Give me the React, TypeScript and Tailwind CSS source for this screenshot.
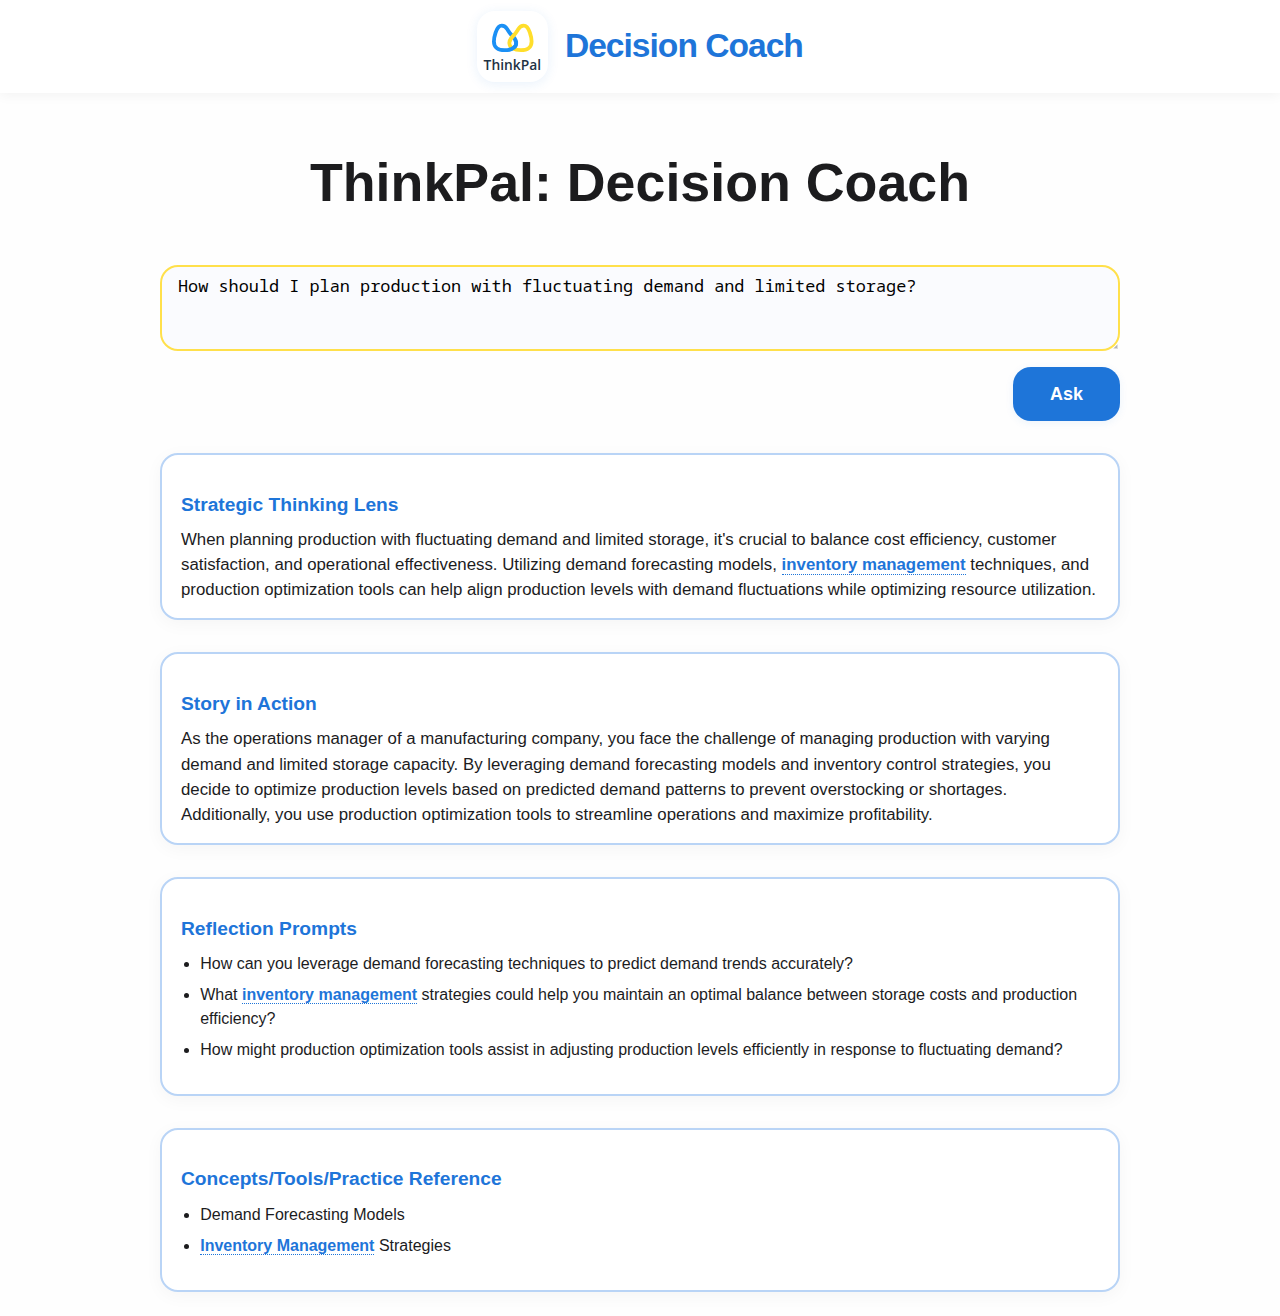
import type { ReactNode } from "react";

const LOOP =
  "M24.8 14.7 C21.4 14.7 19.8 18 18.6 21.6 C17.4 25.2 16.9 28 16.9 30.4 C16.9 36.2 21 39.2 27.5 39.2 C34.3 39.2 39.2 36.8 39.2 32 C39.2 29 37.4 26.9 35.4 25 C33 22.7 31.8 20.6 30.3 18.2 C28.9 16 27.3 14.7 24.8 14.7 Z";

function Logo() {
  return (
    <svg
      viewBox="0 0 71 71"
      className="h-[71px] w-[71px] rounded-[18px] bg-white shadow-[0_2px_12px_rgba(30,117,217,0.1)]"
      aria-label="ThinkPal"
    >
      <g fill="none" strokeWidth="3.8" strokeLinejoin="round">
        <path d={LOOP} stroke="#1b90f5" />
        <path d={LOOP} stroke="#ffde2b" transform="translate(71.5 0) scale(-1 1)" />
        <path d="M39 30.6 C39.2 31 39.2 31.6 39.2 32 C39.2 35.8 36 38 31 38.9" stroke="#1b90f5" />
      </g>
      <text
        x="6.6"
        y="59.2"
        textLength="57.4"
        lengthAdjust="spacingAndGlyphs"
        fill="#1f3344"
        fontFamily="'Open Sans', sans-serif"
        fontSize="13.8"
        fontWeight="600"
      >
        ThinkPal
      </text>
    </svg>
  );
}

function Term({ children }: { children: ReactNode }) {
  return (
    <a className="cursor-pointer border-b border-dotted border-[#1e75d9] font-bold text-[#1e75d9]">
      {children}
    </a>
  );
}

function Card({ title, children }: { title: string; children: ReactNode }) {
  return (
    <section className="mb-8 rounded-[18px] border-2 border-[#b9d4f6] bg-white px-[19px] pb-[15.8px] shadow-[0_4px_18px_rgba(0,0,0,0.04)]">
      <h3 className="mt-[38.6px] mb-[11.4px] text-[19.2px] leading-[22px] font-bold text-[#1e75d9]">
        {title}
      </h3>
      {children}
    </section>
  );
}

function Paragraph({ children }: { children: ReactNode }) {
  return <p className="text-[16.82px] leading-[25.2px]">{children}</p>;
}

function Bullets({ children }: { children: ReactNode }) {
  return (
    <ul className="mt-[12.4px] mb-4 list-disc pl-[19.2px] text-base leading-6 [&>li]:mb-[7px]">
      {children}
    </ul>
  );
}

export default function App() {
  return (
    <div className="min-h-[1316px] bg-[#fefefe] font-['Liberation_Sans',Arial,sans-serif] text-[#1c1c1e]">
      <header className="flex h-[93px] items-center justify-center gap-[16.8px] bg-white shadow-[0_2px_12px_rgba(0,0,0,0.05)]">
        <Logo />
        <span className="mb-px text-[33.6px] leading-10 font-bold tracking-[-1px] text-[#1e75d9]">
          Decision Coach
        </span>
      </header>

      <main className="mx-auto w-[960px] pt-[57px]">
        <h1 className="mb-[51px] text-center text-[53.76px] leading-[64px] font-bold">
          ThinkPal: Decision Coach
        </h1>

        <div className="relative">
          <textarea
            className="block h-[86px] w-full resize-none rounded-[18px] border-2 border-[#ffe04b] bg-[#fafbfe] px-4 py-2 font-['Noto_Sans_Mono','Liberation_Mono',monospace] text-[16.86px] leading-[22px] text-black outline-none"
            defaultValue="How should I plan production with fluctuating demand and limited storage?"
            spellCheck={false}
          />
          <svg viewBox="0 0 5 5" className="absolute right-[2px] bottom-[2px] h-[5px] w-[5px]">
            <path d="M5 0 V5 H0 Z" fill="#dcdcdc" />
            <path d="M4 1 V4 H1 Z" fill="#b4b4b4" />
          </svg>
        </div>
        <div className="mt-4 mb-8 flex justify-end">
          <button className="h-[54px] w-[107px] rounded-[18px] bg-[#1e75d9] text-[17.9px] font-bold text-white shadow-[0_2px_8px_rgba(30,117,217,0.08)]">
            Ask
          </button>
        </div>

        <Card title="Strategic Thinking Lens">
          <Paragraph>
            When planning production with fluctuating demand and limited storage, it's crucial to
            balance cost efficiency, customer satisfaction, and operational effectiveness. Utilizing
            demand forecasting models, <Term>inventory management</Term> techniques, and production
            optimization tools can help align production levels with demand fluctuations while
            optimizing resource utilization.
          </Paragraph>
        </Card>

        <Card title="Story in Action">
          <Paragraph>
            As the operations manager of a manufacturing company, you face the challenge of managing
            production with varying demand and limited storage capacity. By leveraging demand
            forecasting models and inventory control strategies, you decide to optimize production
            levels based on predicted demand patterns to prevent overstocking or shortages.
            <br />
            Additionally, you use production optimization tools to streamline operations and
            maximize profitability.
          </Paragraph>
        </Card>

        <Card title="Reflection Prompts">
          <Bullets>
            <li>How can you leverage demand forecasting techniques to predict demand trends accurately?</li>
            <li>
              What <Term>inventory management</Term> strategies could help you maintain an optimal
              balance between storage costs and production efficiency?
            </li>
            <li>
              How might production optimization tools assist in adjusting production levels
              efficiently in response to fluctuating demand?
            </li>
          </Bullets>
        </Card>

        <Card title="Concepts/Tools/Practice Reference">
          <Bullets>
            <li>Demand Forecasting Models</li>
            <li>
              <Term>Inventory Management</Term> Strategies
            </li>
          </Bullets>
        </Card>
      </main>
    </div>
  );
}
